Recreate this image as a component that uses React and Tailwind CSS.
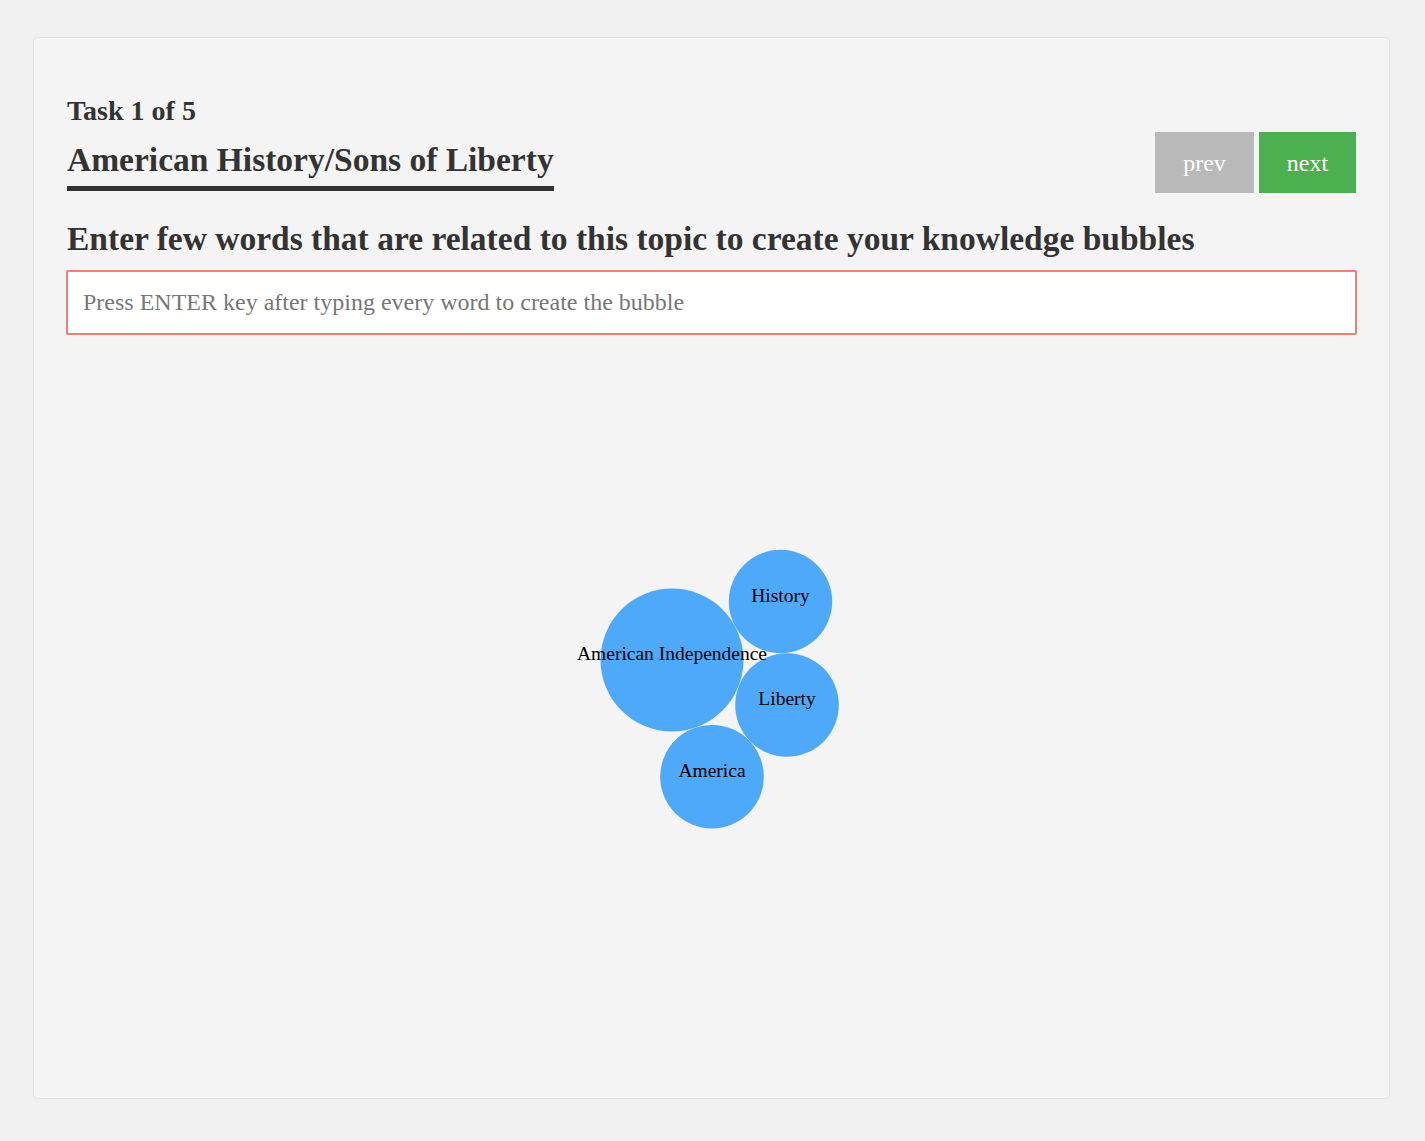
import React from "react";

const bubbles = [
  { x: 606, y: 324, r: 71.5, label: "American Independence" },
  { x: 714.5, y: 265.5, r: 51.7, label: "History" },
  { x: 721, y: 369, r: 51.8, label: "Liberty" },
  { x: 646, y: 440.7, r: 51.8, label: "America" },
];

export default function App() {
  return (
    <div className="min-h-[1141px] bg-[#f0f0f0] pt-[37px] pl-[33px] pr-[35px] pb-[42px]" style={{ fontFamily: '"Liberation Serif", "Times New Roman", serif' }}>
      <div className="h-[1062px] bg-[#f4f4f4] border border-[#e2e2e2] rounded-[4px] px-[33px] pt-[57px]">
        <div className="text-[28px] font-bold text-[#333] leading-[32px]">Task 1 of 5</div>
        <div className="flex items-start justify-between mt-[4px]">
          <h2 className="inline-block mt-[9px] text-[33.5px] font-bold text-[#333] leading-[40px] pb-[6px] border-b-[5px] border-[#333]">
            American History/Sons of Liberty
          </h2>
          <div className="flex gap-[5px] mt-[1px]">
            <button className="w-[99px] h-[61px] bg-[#b9b9b9] text-white text-[24px]">prev</button>
            <button className="w-[97px] h-[61px] bg-[#4caf50] text-white text-[24px]">next</button>
          </div>
        </div>
        <div className="mt-[27px] text-[33.5px] font-bold text-[#333] leading-[38px]">
          Enter few words that are related to this topic to create your knowledge bubbles
        </div>
        <input
          className="mt-[12px] block w-[calc(100%+2px)] h-[65px] ml-[-1px] bg-white border-2 border-[#e8836f] rounded-[2px] px-[15px] text-[24px] text-[#333] placeholder:text-[#777] outline-none"
          placeholder="Press ENTER key after typing every word to create the bubble"
        />
        <svg width="1290" height="680" className="block ml-[-1px] mt-[1px]">
          {bubbles.map((b) => (
            <circle key={b.label} cx={b.x} cy={b.y} r={b.r} fill="#4fa9fa" />
          ))}
          {bubbles.map((b) => (
            <text key={b.label} x={b.x} y={b.y} textAnchor="middle" fontSize="19.5" fill="#000" style={{ fontFamily: '"Liberation Serif", serif' }}>
              {b.label}
            </text>
          ))}
        </svg>
      </div>
    </div>
  );
}
